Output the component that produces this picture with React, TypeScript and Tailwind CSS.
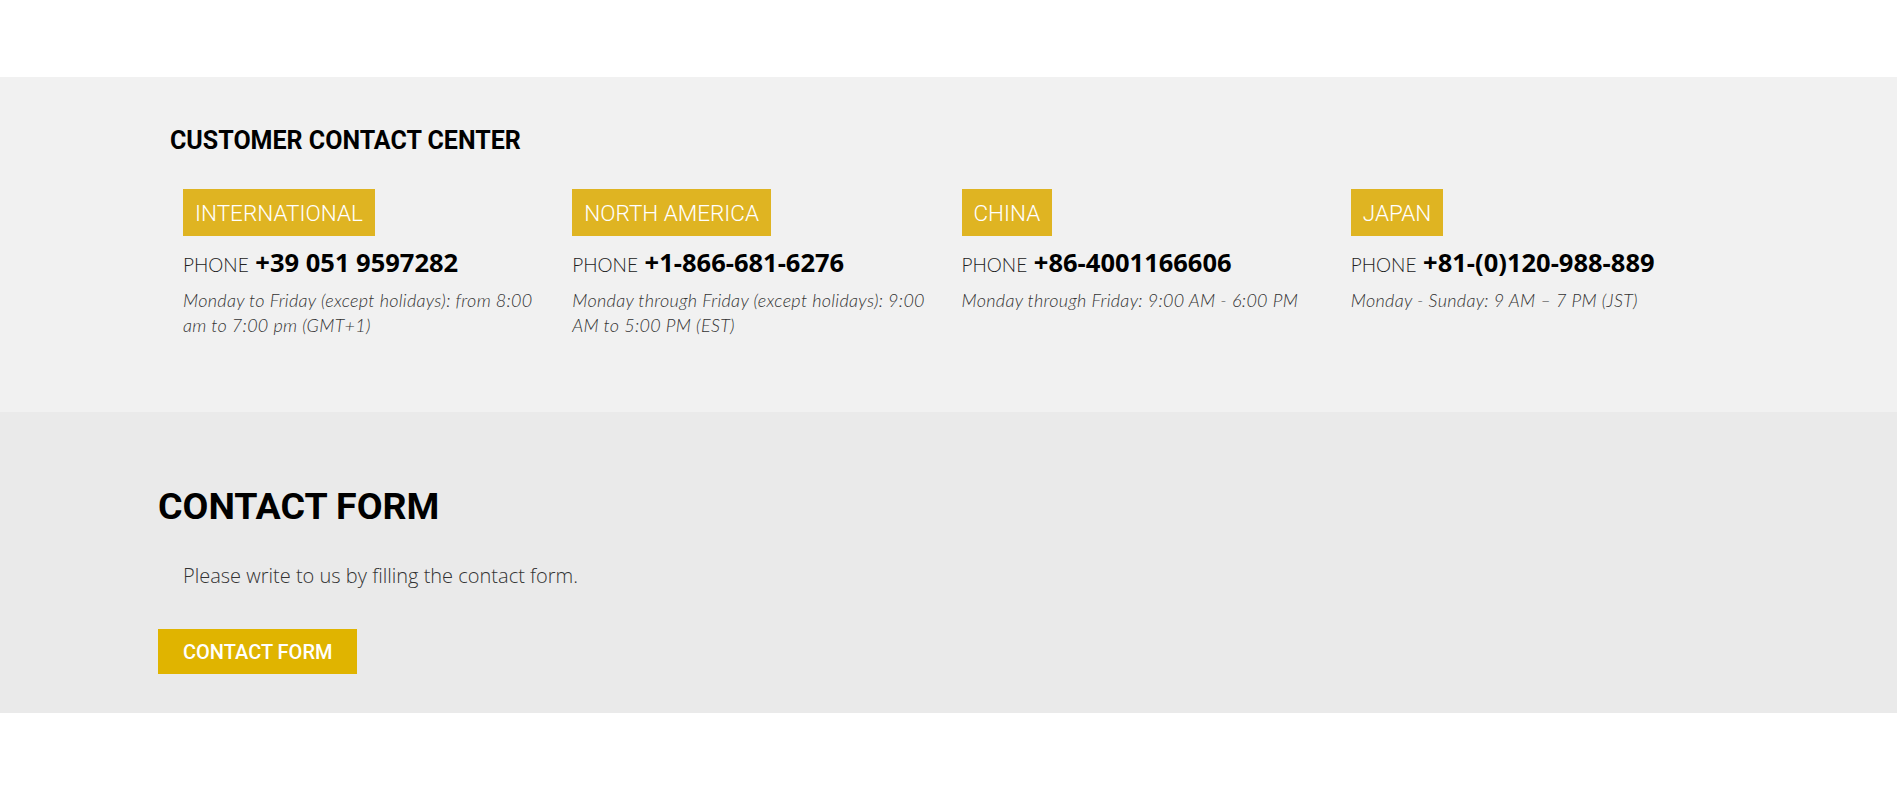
import React from "react";

const regions = [
  {
    name: "INTERNATIONAL",
    phone: "+39 051 9597282",
    hours: "Monday to Friday (except holidays): from 8:00 am to 7:00 pm (GMT+1)",
  },
  {
    name: "NORTH AMERICA",
    phone: "+1-866-681-6276",
    hours: "Monday through Friday (except holidays): 9:00 AM to 5:00 PM (EST)",
  },
  {
    name: "CHINA",
    phone: "+86-4001166606",
    hours: "Monday through Friday: 9:00 AM - 6:00 PM",
  },
  {
    name: "JAPAN",
    phone: "+81-(0)120-988-889",
    hours: "Monday - Sunday: 9 AM \u2013 7 PM (JST)",
  },
];

export default function App() {
  return (
    <div className="w-full bg-white" style={{ minHeight: 803 }}>
      <div className="h-[77px]" />
      <section className="bg-[#f1f1f1] h-[335px]">
        <div className="max-w-[1581px] mx-auto px-[12px] pt-[50px]">
          <h2 className="font-['Roboto',sans-serif] font-bold text-[25px] leading-[28px] text-black">
            CUSTOMER CONTACT CENTER
          </h2>
          <div className="grid grid-cols-4 mt-[34px]">
            {regions.map((r) => (
              <div key={r.name} className="pl-[13px] pr-[13px]">
                <div className="inline-flex items-center h-[47px] px-[12px] pt-[3px] bg-[#dfb422] text-white font-['Roboto',sans-serif] font-light text-[22.5px]">
                  {r.name}
                </div>
                <div className="mt-[10px] font-['Open_Sans',sans-serif] text-[25.5px] leading-[32px] whitespace-nowrap">
                  <span className="font-['Lato',sans-serif] font-light text-[19px] text-[#222]">
                    PHONE
                  </span>{" "}
                  <span className="font-bold text-black">{r.phone}</span>
                </div>
                <p className="mt-[7px] font-['Lato',sans-serif] font-light italic text-[18px] leading-[25px] text-[#333] tracking-[0.3px]">
                  {r.hours}
                </p>
              </div>
            ))}
          </div>
        </div>
      </section>
      <section className="bg-[#eaeaea] h-[301px]">
        <div className="max-w-[1581px] mx-auto pt-[72px]">
          <h2 className="font-['Roboto',sans-serif] font-bold text-[37.5px] leading-[44px] text-black">
            CONTACT FORM
          </h2>
          <p className="mt-[34px] pl-[25px] font-['Open_Sans',sans-serif] font-light text-[20px] leading-[28px] text-[#333]">
            Please write to us by filling the contact form.
          </p>
          <button className="mt-[39px] h-[45px] px-[25px] bg-[#e0b400] text-white font-['Roboto',sans-serif] font-medium text-[20px] leading-none">
            CONTACT FORM
          </button>
        </div>
      </section>
    </div>
  );
}
